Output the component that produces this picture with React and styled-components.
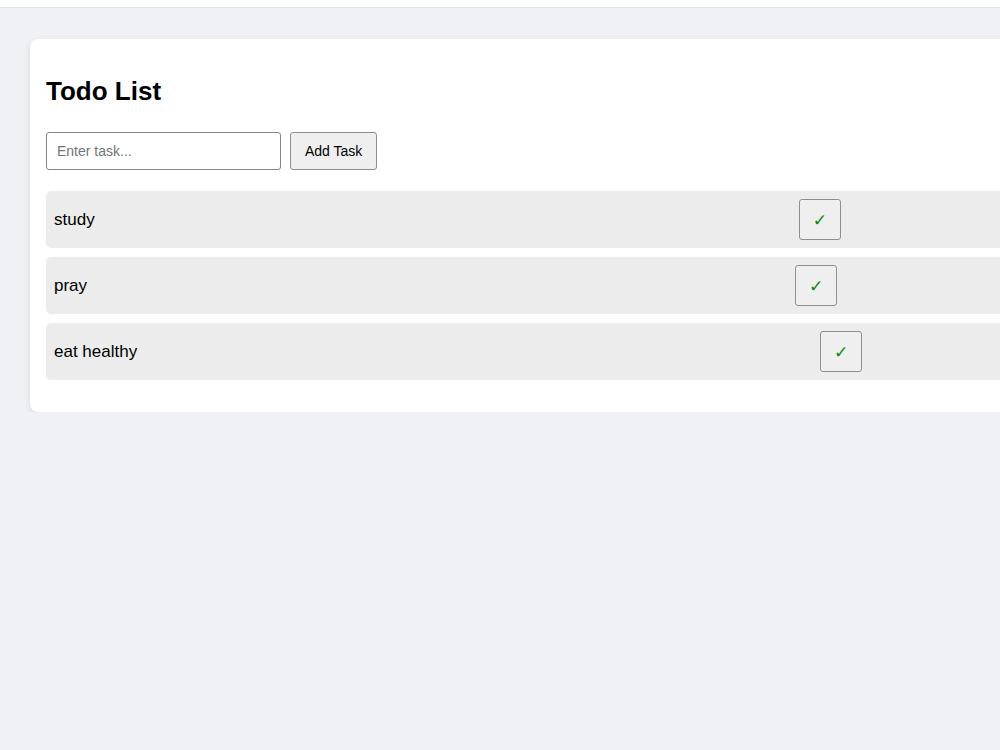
import React, { useState } from 'react';
import styled, { createGlobalStyle } from 'styled-components';
import { X } from 'lucide-react';

const GlobalStyle = createGlobalStyle`
  html, body {
    margin: 0;
    padding: 0;
    overflow: hidden;
    background: #f0f1f5;
    font-family: "Liberation Sans", Arial, sans-serif;
  }
`;

const TopBar = styled.div`
  height: 7px;
  background: #ffffff;
  border-bottom: 1px solid #e2e3e7;
`;

const Page = styled.div`
  padding: 31px 0 0 30px;
`;

const Card = styled.div`
  width: 1581px;
  box-sizing: border-box;
  background: #ffffff;
  border-radius: 8px;
  box-shadow: 0 2px 6px rgba(0, 0, 0, 0.1);
  padding: 37px 16px 32px;
`;

const Title = styled.h2`
  margin: 0 0 26px;
  font-size: 26px;
  line-height: 30px;
  font-weight: bold;
  color: #000;
`;

const Form = styled.form`
  display: flex;
  gap: 9px;
  margin-bottom: 21px;
`;

const Input = styled.input`
  width: 235px;
  height: 38px;
  box-sizing: border-box;
  padding: 0 10px;
  border: 1px solid #858585;
  border-radius: 3px;
  font-family: inherit;
  font-size: 14px;
  color: #000;
  &::placeholder {
    color: #757575;
  }
`;

const Button = styled.button`
  height: 38px;
  box-sizing: border-box;
  padding: 0 14px;
  background: #efefef;
  border: 1px solid #8f8f8f;
  border-radius: 3px;
  font-family: inherit;
  font-size: 14px;
  color: #000;
`;

const List = styled.ul`
  list-style: none;
  margin: 0;
  padding: 0;
  display: flex;
  flex-direction: column;
  gap: 9px;
`;

const Item = styled.li`
  display: flex;
  align-items: center;
  justify-content: space-between;
  padding: 8px;
  background: #ececec;
  border-radius: 5px;
  font-size: 17px;
  color: #000;
`;

const IconButton = styled.button`
  width: 42px;
  height: 41px;
  padding: 0;
  display: flex;
  align-items: center;
  justify-content: center;
  background: #efefef;
  border: 1px solid #8f8f8f;
  border-radius: 3px;
  font-family: "DejaVu Sans", sans-serif;
  font-size: 17px;
  font-weight: bold;
  color: ${props => props.color};
`;

export default function App() {
  const [tasks] = useState(['study', 'pray', 'eat healthy']);

  return (
    <>
      <GlobalStyle />
      <TopBar />
      <Page>
        <Card>
          <Title>Todo List</Title>
          <Form onSubmit={e => e.preventDefault()}>
            <Input type="text" placeholder="Enter task..." />
            <Button type="submit">Add Task</Button>
          </Form>
          <List>
            {tasks.map(task => (
              <Item key={task}>
                <span>{task}</span>
                <IconButton color="#0a8a0a">✓</IconButton>
                <IconButton color="red" aria-label="delete">
                  <X size={16} />
                </IconButton>
              </Item>
            ))}
          </List>
        </Card>
      </Page>
    </>
  );
}
